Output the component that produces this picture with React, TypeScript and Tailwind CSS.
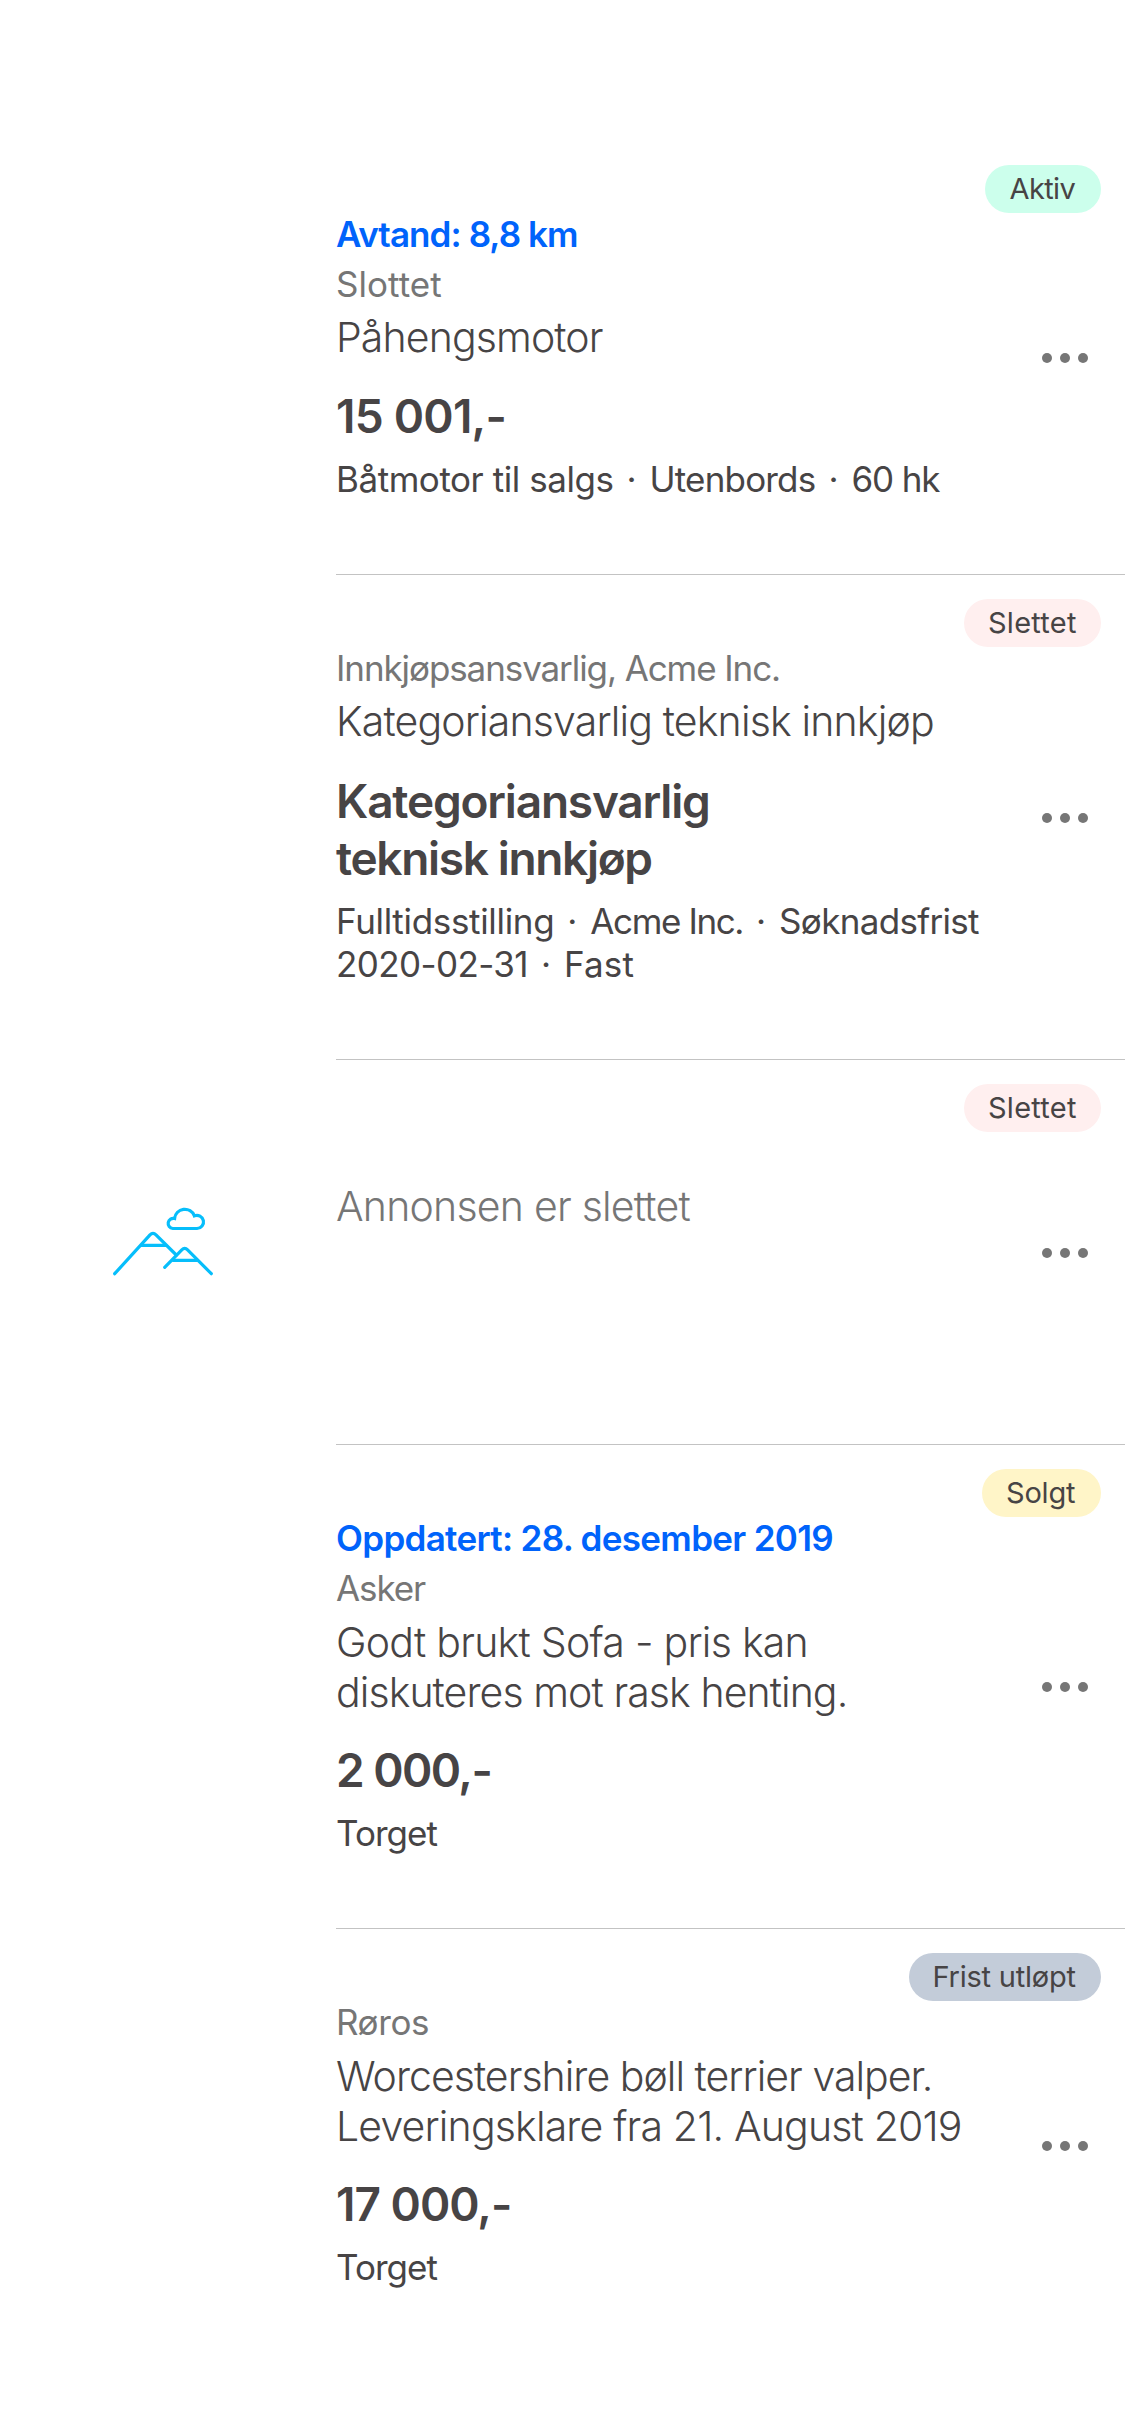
import { Fragment } from "react";

type Line = { text: string; tracking: string };

type Ad = {
  height: string;
  dots: string;
  badge: Line & { style: string };
  detail?: Line;
  subtitle?: Line;
  title?: Line[];
  price?: Line[];
  facts?: Line[][];
  deleted?: boolean;
};

const ads: Ad[] = [
  {
    height: "h-[434px]",
    dots: "pt-px",
    badge: { text: "Aktiv", tracking: "tracking-[-0.61px]", style: "bg-[#ccffec] w-[116px] pl-[24.5px]" },
    detail: { text: "Avtand: 8,8 km", tracking: "tracking-[-0.93px]" },
    subtitle: { text: "Slottet", tracking: "tracking-[0.03px]" },
    title: [{ text: "Påhengsmotor", tracking: "tracking-[-0.88px]" }],
    price: [{ text: "15 001,-", tracking: "tracking-[-0.75px]" }],
    facts: [
      [
        { text: "Båtmotor til salgs", tracking: "tracking-[-0.45px]" },
        { text: "Utenbords", tracking: "tracking-[-0.8px]" },
        { text: "60 hk", tracking: "tracking-[-1.1px]" },
      ],
    ],
  },
  {
    height: "h-[485px]",
    dots: "pt-0.5",
    badge: { text: "Slettet", tracking: "tracking-[0.26px]", style: "bg-[#ffefef] w-[137px] pl-6" },
    subtitle: { text: "Innkjøpsansvarlig, Acme Inc.", tracking: "tracking-[-1.09px]" },
    title: [{ text: "Kategoriansvarlig teknisk innkjøp", tracking: "tracking-[-0.83px]" }],
    price: [
      { text: "Kategoriansvarlig", tracking: "tracking-[-1.2px]" },
      { text: "teknisk innkjøp", tracking: "tracking-[-1.33px]" },
    ],
    facts: [
      [
        { text: "Fulltidsstilling", tracking: "tracking-[-0.32px]" },
        { text: "Acme Inc.", tracking: "tracking-[-1.39px]" },
        { text: "Søknadsfrist", tracking: "tracking-[-0.68px]" },
      ],
      [
        { text: "2020-02-31", tracking: "tracking-[-0.6px]" },
        { text: "Fast", tracking: "tracking-[0.19px]" },
      ],
    ],
  },
  {
    height: "h-[385px]",
    dots: "pt-0.5",
    badge: { text: "Slettet", tracking: "tracking-[0.26px]", style: "bg-[#ffefef] w-[137px] pl-6" },
    title: [{ text: "Annonsen er slettet", tracking: "tracking-[-0.77px]" }],
    deleted: true,
  },
  {
    height: "h-[484px]",
    dots: "pt-px",
    badge: { text: "Solgt", tracking: "tracking-[-0.2px]", style: "bg-[#fff5c8] w-[119px] pl-6" },
    detail: { text: "Oppdatert: 28. desember 2019", tracking: "tracking-[-0.68px]" },
    subtitle: { text: "Asker", tracking: "tracking-[-1.1px]" },
    title: [
      { text: "Godt brukt Sofa - pris kan", tracking: "tracking-[-0.74px]" },
      { text: "diskuteres mot rask henting.", tracking: "tracking-[-0.92px]" },
    ],
    price: [{ text: "2 000,-", tracking: "tracking-[-1.53px]" }],
    facts: [[{ text: "Torget", tracking: "tracking-[-0.96px]" }]],
  },
  {
    height: "h-[434px]",
    dots: "",
    badge: { text: "Frist utløpt", tracking: "tracking-[-0.22px]", style: "bg-[#c3ccd9] w-[192px] pl-[23.5px]" },
    subtitle: { text: "Røros", tracking: "tracking-[-0.4px]" },
    title: [
      { text: "Worcestershire bøll terrier valper.", tracking: "tracking-[-0.97px]" },
      { text: "Leveringsklare fra 21. August 2019", tracking: "tracking-[-0.83px]" },
    ],
    price: [{ text: "17 000,-", tracking: "tracking-[-1px]" }],
    facts: [[{ text: "Torget", tracking: "tracking-[-0.96px]" }]],
  },
];

function Mountains() {
  return (
    <svg
      className="mt-[146px] ml-28 h-[72px] w-[102px]"
      viewBox="0 0 102 72"
      fill="none"
      stroke="#06befb"
      strokeWidth="3.2"
      strokeLinecap="round"
      strokeLinejoin="round"
    >
      <path d="M2.7 67.7 38 28.9Q41 25.8 44 28.9L64.3 49" />
      <path d="M29.5 39.4H53.5" />
      <path d="M52.7 61.3 69.8 43.9Q72.7 41 75.6 43.9L99.3 67.7" />
      <path d="M61 54.3H85.3" />
      <path
        strokeLinejoin="miter"
        d="M60.8 22.5A5.1 5.1 0 1 1 62.6 12.5A10.3 10.3 0 0 1 82.4 9.8A6.6 6.6 0 1 1 85 22.5Z"
      />
    </svg>
  );
}

function Dots() {
  return (
    <div className="flex shrink-0 items-center gap-2">
      <span className="size-2.5 rounded-full bg-[#767676]" />
      <span className="size-2.5 rounded-full bg-[#767676]" />
      <span className="size-2.5 rounded-full bg-[#767676]" />
    </div>
  );
}

function Lines({ lines }: { lines: Line[] }) {
  return (
    <>
      {lines.map((l) => (
        <span key={l.text} className={`block ${l.tracking}`}>
          {l.text}
        </span>
      ))}
    </>
  );
}

function titleSpacing(ad: Ad) {
  if (ad.deleted) return "mt-[49px] text-[#767676]";
  return ad.title && ad.title.length > 1 ? "mt-[7px] mb-[25px]" : "mt-1.5 mb-[26px]";
}

function AdRow({ ad, last }: { ad: Ad; last: boolean }) {
  return (
    <article className={`flex ${ad.height}`}>
      <div className="w-[336px] shrink-0">{ad.deleted && <Mountains />}</div>
      <div className={`relative flex flex-1 ${last ? "" : "border-b border-[#c3c3c3]"}`}>
        <div className="w-[706px] shrink-0 pt-[72px] whitespace-nowrap">
          {ad.detail && (
            <p className={`mb-[7px] text-[35px] leading-[43px] font-semibold text-[#0063fb] ${ad.detail.tracking}`}>
              {ad.detail.text}
            </p>
          )}
          {ad.subtitle && (
            <p className={`text-[35px] leading-[43px] text-[#767676] ${ad.subtitle.tracking}`}>{ad.subtitle.text}</p>
          )}
          {ad.title && (
            <h2 className={`text-[41px] leading-[50px] font-light ${titleSpacing(ad)}`}>
              <Lines lines={ad.title} />
            </h2>
          )}
          {ad.price && (
            <p className={`mb-[13px] text-[46px] leading-[57px] font-semibold ${ad.price.length > 1 ? "pt-px" : ""}`}>
              <Lines lines={ad.price} />
            </p>
          )}
          {ad.facts?.map((facts, i) => (
            <p key={i} className="flex text-[35px] leading-[43px]">
              {facts.map((f, j) => (
                <Fragment key={f.text}>
                  {j > 0 && <span className="w-9 text-center">·</span>}
                  <span className={f.tracking}>{f.text}</span>
                </Fragment>
              ))}
            </p>
          ))}
        </div>
        <div className={`flex items-center ${ad.dots}`}>
          <Dots />
        </div>
        <span
          className={`absolute top-6 right-6 flex h-12 items-center rounded-full text-[29px] whitespace-nowrap ${ad.badge.style} ${ad.badge.tracking}`}
        >
          {ad.badge.text}
        </span>
      </div>
    </article>
  );
}

export default function App() {
  return (
    <main className="min-h-[2436px] w-[1125px] bg-white pt-[141px] font-['Inter',sans-serif] text-[#474445]">
      {ads.map((ad, i) => (
        <AdRow key={i} ad={ad} last={i === ads.length - 1} />
      ))}
    </main>
  );
}
